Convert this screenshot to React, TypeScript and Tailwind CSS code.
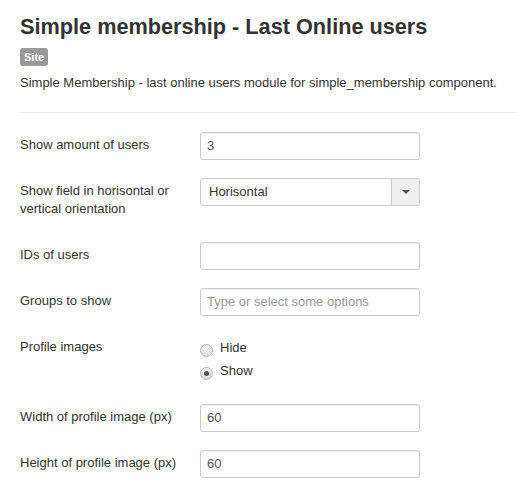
import React from 'react';

const inputCls =
  'box-border block h-[28px] w-[220px] rounded-[3px] border border-[#ccc] bg-white px-[6px] text-[13px] leading-[18px] text-[#555] shadow-[inset_0_1px_1px_rgba(0,0,0,0.075)] outline-none placeholder:text-[#999]';

const Row: React.FC<{ label: React.ReactNode; className?: string; children: React.ReactNode }> = ({
  label,
  className = '',
  children,
}) => (
  <div className={`flex ${className}`}>
    <label className="w-[180px] shrink-0 pt-[4px] leading-[18px]">{label}</label>
    <div>{children}</div>
  </div>
);

const Radio: React.FC<{ label: string; checked?: boolean }> = ({ label, checked }) => (
  <label className="flex h-[18px] items-center">
    <span className="mt-[5px] flex h-[13px] w-[13px] items-center justify-center rounded-full border border-[#b5b5b5] bg-gradient-to-b from-[#f6f6f6] to-[#dcdcdc]">
      {checked && <span className="h-[5px] w-[5px] rounded-full bg-[#555]" />}
    </span>
    <span className="ml-[7px] text-[13px]">{label}</span>
  </label>
);

export default function App() {
  return (
    <div className="min-h-[503px] bg-white pl-[20px] pt-[15px] font-['Liberation_Sans',Arial,sans-serif] text-[13px] text-[#333]">
      <h2 className="text-[21.7px] font-bold leading-[24px] text-[#333]">Simple membership - Last Online users</h2>
      <span className="mt-[9px] inline-block rounded-[3px] bg-[#999] px-[4px] py-[2px] text-[11px] font-bold leading-[14px] text-white">
        Site
      </span>
      <p className="mt-[7px] leading-[18px]">
        Simple Membership - last online users module for simple_membership component.
      </p>
      <hr className="mt-[20px] mb-[19px] border-0 border-t border-[#eee]" />

      <Row label="Show amount of users" className="mb-[18px]">
        <input className={inputCls} defaultValue="3" />
      </Row>

      <Row
        label={
          <>
            Show field in horisontal or
            <br />
            vertical orientation
          </>
        }
        className="mb-[18px] h-[46px]"
      >
        <div className="box-border flex h-[28px] w-[220px] rounded-[3px] border border-[#ccc] bg-white">
          <span className="flex-1 pl-[8px] pt-[4px] leading-[18px] text-[#333]">Horisontal</span>
          <span className="flex w-[28px] items-center justify-center rounded-r-[3px] border-l border-[#ccc] bg-[#f0f0f0]">
            <span className="h-0 w-0 border-x-[4px] border-t-[4px] border-x-transparent border-t-[#555]" />
          </span>
        </div>
      </Row>

      <Row label="IDs of users" className="mb-[18px]">
        <input className={inputCls} />
      </Row>

      <Row label="Groups to show" className="mb-[18px]">
        <input className={inputCls} placeholder="Type or select some options" />
      </Row>

      <Row label="Profile images" className="mb-[18px] h-[52px]">
        <div className="flex flex-col gap-[5px] pt-[5px]">
          <Radio label="Hide" />
          <Radio label="Show" checked />
        </div>
      </Row>

      <Row label="Width of profile image (px)" className="mb-[18px]">
        <input className={inputCls} defaultValue="60" />
      </Row>

      <Row label="Height of profile image (px)">
        <input className={inputCls} defaultValue="60" />
      </Row>
    </div>
  );
}
